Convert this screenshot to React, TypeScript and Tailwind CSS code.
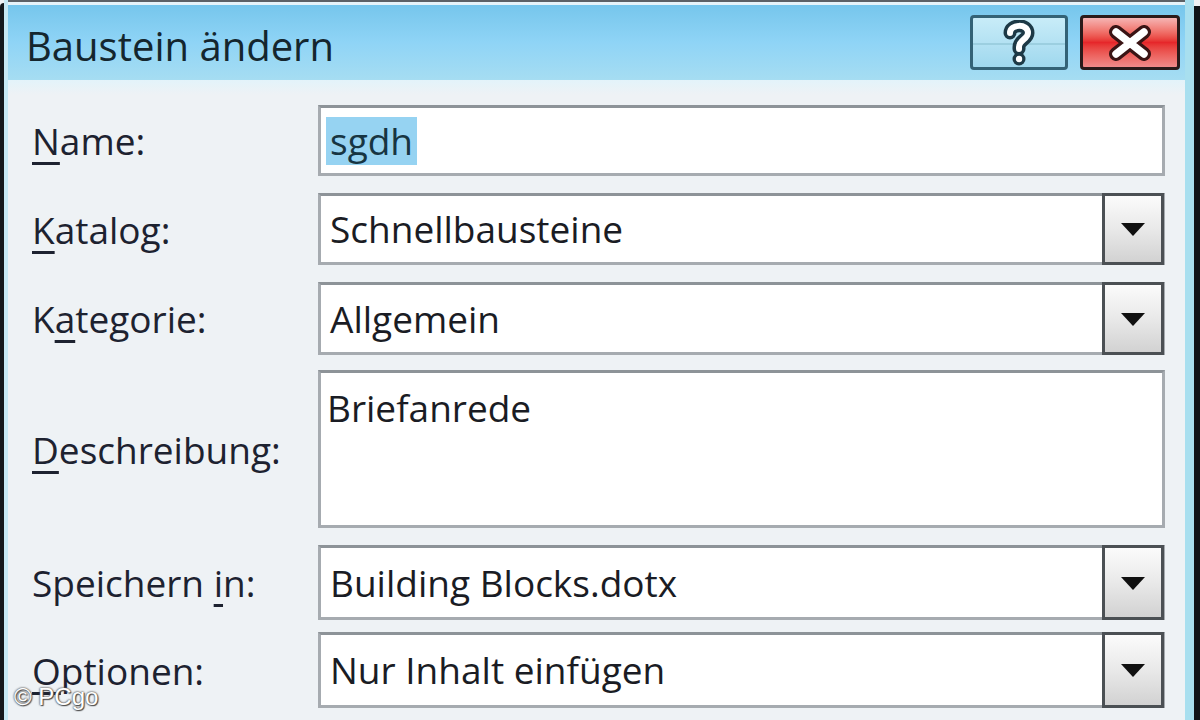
import React from "react";

const font = { fontFamily: '"Open Sans", "Noto Sans", "DejaVu Sans", sans-serif' };

function Arrow() {
  return (
    <div className="w-[62px] -my-[3px] -mr-[2px] border-[3px] border-[#4b5054] bg-gradient-to-b from-[#fbfbfb] via-[#e9e9e9] to-[#d2d2d2] flex items-center justify-center">
      <svg width="26" height="16" viewBox="0 0 26 16">
        <polygon points="1,2 25,2 13,15" fill="#101010" />
      </svg>
    </div>
  );
}

function Label({ pre, u, post }: { pre?: string; u: string; post: string }) {
  return (
    <div className="w-[286px] shrink-0 text-[37px] text-[#1d2230] leading-none">
      {pre}
      <span className="underline decoration-[3px] underline-offset-[7px]">{u}</span>
      {post}
    </div>
  );
}

const field = "border-[3px] border-[#a6abb0] border-t-[#8d9398] bg-white";

export default function App() {
  return (
    <div className="w-[1200px] h-[720px] overflow-hidden relative flex bg-[#eef2f5]" style={font}>
      <div className="w-[4px] bg-[#14191d] mt-[3px] rounded-tl-[4px]" />
      <div className="w-[4px] bg-[#c6e9f5]" />
      <div className="flex-1 flex flex-col min-w-0">
        <div className="h-[2px] bg-[#5c6166]" />
        <div className="h-[3px] bg-[#e6f3f9]" />
        <div className="h-[75px] bg-gradient-to-b from-[#76c6ec] via-[#8fd4f6] to-[#a6ddf2] flex items-center justify-between pl-[18px] pr-[5px]">
          <span className="text-[40px] text-[#14262e] mt-[6px] leading-none">Baustein ändern</span>
          <div className="flex gap-[12px]">
            <div className="w-[98px] h-[55px] rounded-[4px] border-[3px] border-[#336276] bg-gradient-to-b from-[#c8ecf8] via-[#b4e2f3] to-[#9fd8ee] flex items-center justify-center relative">
              <div className="absolute left-0 right-0 top-[25px] h-[2px] bg-[#9ccfe0]" />
              <svg width="36" height="46" viewBox="0 0 36 46" className="relative">
                <path d="M9 13 C9 4 27 3 27 13 C27 19 18 20 18 27 L18 29" fill="none" stroke="#1d3946" strokeWidth="13" strokeLinecap="round" strokeLinejoin="round" />
                <circle cx="18" cy="39" r="6.5" fill="#1d3946" />
                <path d="M9 13 C9 4 27 3 27 13 C27 19 18 20 18 27 L18 29" fill="none" stroke="#ffffff" strokeWidth="6" strokeLinecap="round" strokeLinejoin="round" />
                <circle cx="18" cy="39" r="3.2" fill="#ffffff" />
              </svg>
            </div>
            <div className="w-[100px] h-[55px] rounded-[4px] border-[3px] border-[#2a1a1a] bg-gradient-to-b from-[#f4b4b4] via-[#e6262a] to-[#f08a8a] flex items-center justify-center">
              <svg width="48" height="36" viewBox="0 0 48 36">
                <path d="M10 7 L38 29 M38 7 L10 29" stroke="#3a1414" strokeWidth="14" strokeLinecap="round" />
                <path d="M10 7 L38 29 M38 7 L10 29" stroke="#ffffff" strokeWidth="7.5" strokeLinecap="round" />
              </svg>
            </div>
          </div>
        </div>
        <div className="h-[15px] bg-gradient-to-b from-[#e3f3fa] to-[#eef2f5]" />

        <div className="flex flex-col pl-[24px] pr-[20px]">
          <div className="flex items-center mt-[10px] h-[71px]">
            <Label u="N" post="ame:" />
            <div className={`${field} flex-1 h-full flex items-center pl-[5px]`}>
              <span className="text-[37px] leading-[48px] bg-[#96d3f2] text-[#173542] px-[4px]">sgdh</span>
            </div>
          </div>
          <div className="flex items-center mt-[17px] h-[72px]">
            <Label u="K" post="atalog:" />
            <div className={`${field} flex-1 h-full flex`}>
              <div className="flex-1 flex items-center pl-[9px] text-[37px] text-[#1a1c24]">Schnellbausteine</div>
              <Arrow />
            </div>
          </div>
          <div className="flex items-center mt-[17px] h-[73px]">
            <Label pre="K" u="a" post="tegorie:" />
            <div className={`${field} flex-1 h-full flex`}>
              <div className="flex-1 flex items-center pl-[9px] text-[37px] text-[#1a1c24]">Allgemein</div>
              <Arrow />
            </div>
          </div>
          <div className="flex items-center mt-[15px] h-[158px]">
            <Label u="D" post="eschreibung:" />
            <div className={`${field} flex-1 h-full pl-[6px] pt-[10px] text-[37px] leading-[50px] text-[#1a1c24]`}>Briefanrede</div>
          </div>
          <div className="flex items-center mt-[17px] h-[75px]">
            <Label pre="Speichern " u="i" post="n:" />
            <div className={`${field} flex-1 h-full flex`}>
              <div className="flex-1 flex items-center pl-[9px] text-[37px] text-[#1a1c24]">Building Blocks.dotx</div>
              <Arrow />
            </div>
          </div>
          <div className="flex items-center mt-[12px] h-[76px]">
            <Label u="O" post="ptionen:" />
            <div className={`${field} flex-1 h-full flex`}>
              <div className="flex-1 flex items-center pl-[9px] text-[37px] text-[#1a1c24]">Nur Inhalt einfügen</div>
              <Arrow />
            </div>
          </div>
        </div>
      </div>
      <div className="w-[9px] bg-[#a8dfef]" />
      <div className="w-[6px] bg-[#0f1418] mt-[6px]" />

      <div
        className="absolute left-[14px] top-[685px] text-[24px] text-white leading-none"
        style={{ fontFamily: '"Liberation Sans", Arial, sans-serif', textShadow: "0 0 2px #555, 0 0 2px #555, 1px 1px 1px #444" }}
      >
        © PCgo
      </div>
    </div>
  );
}
